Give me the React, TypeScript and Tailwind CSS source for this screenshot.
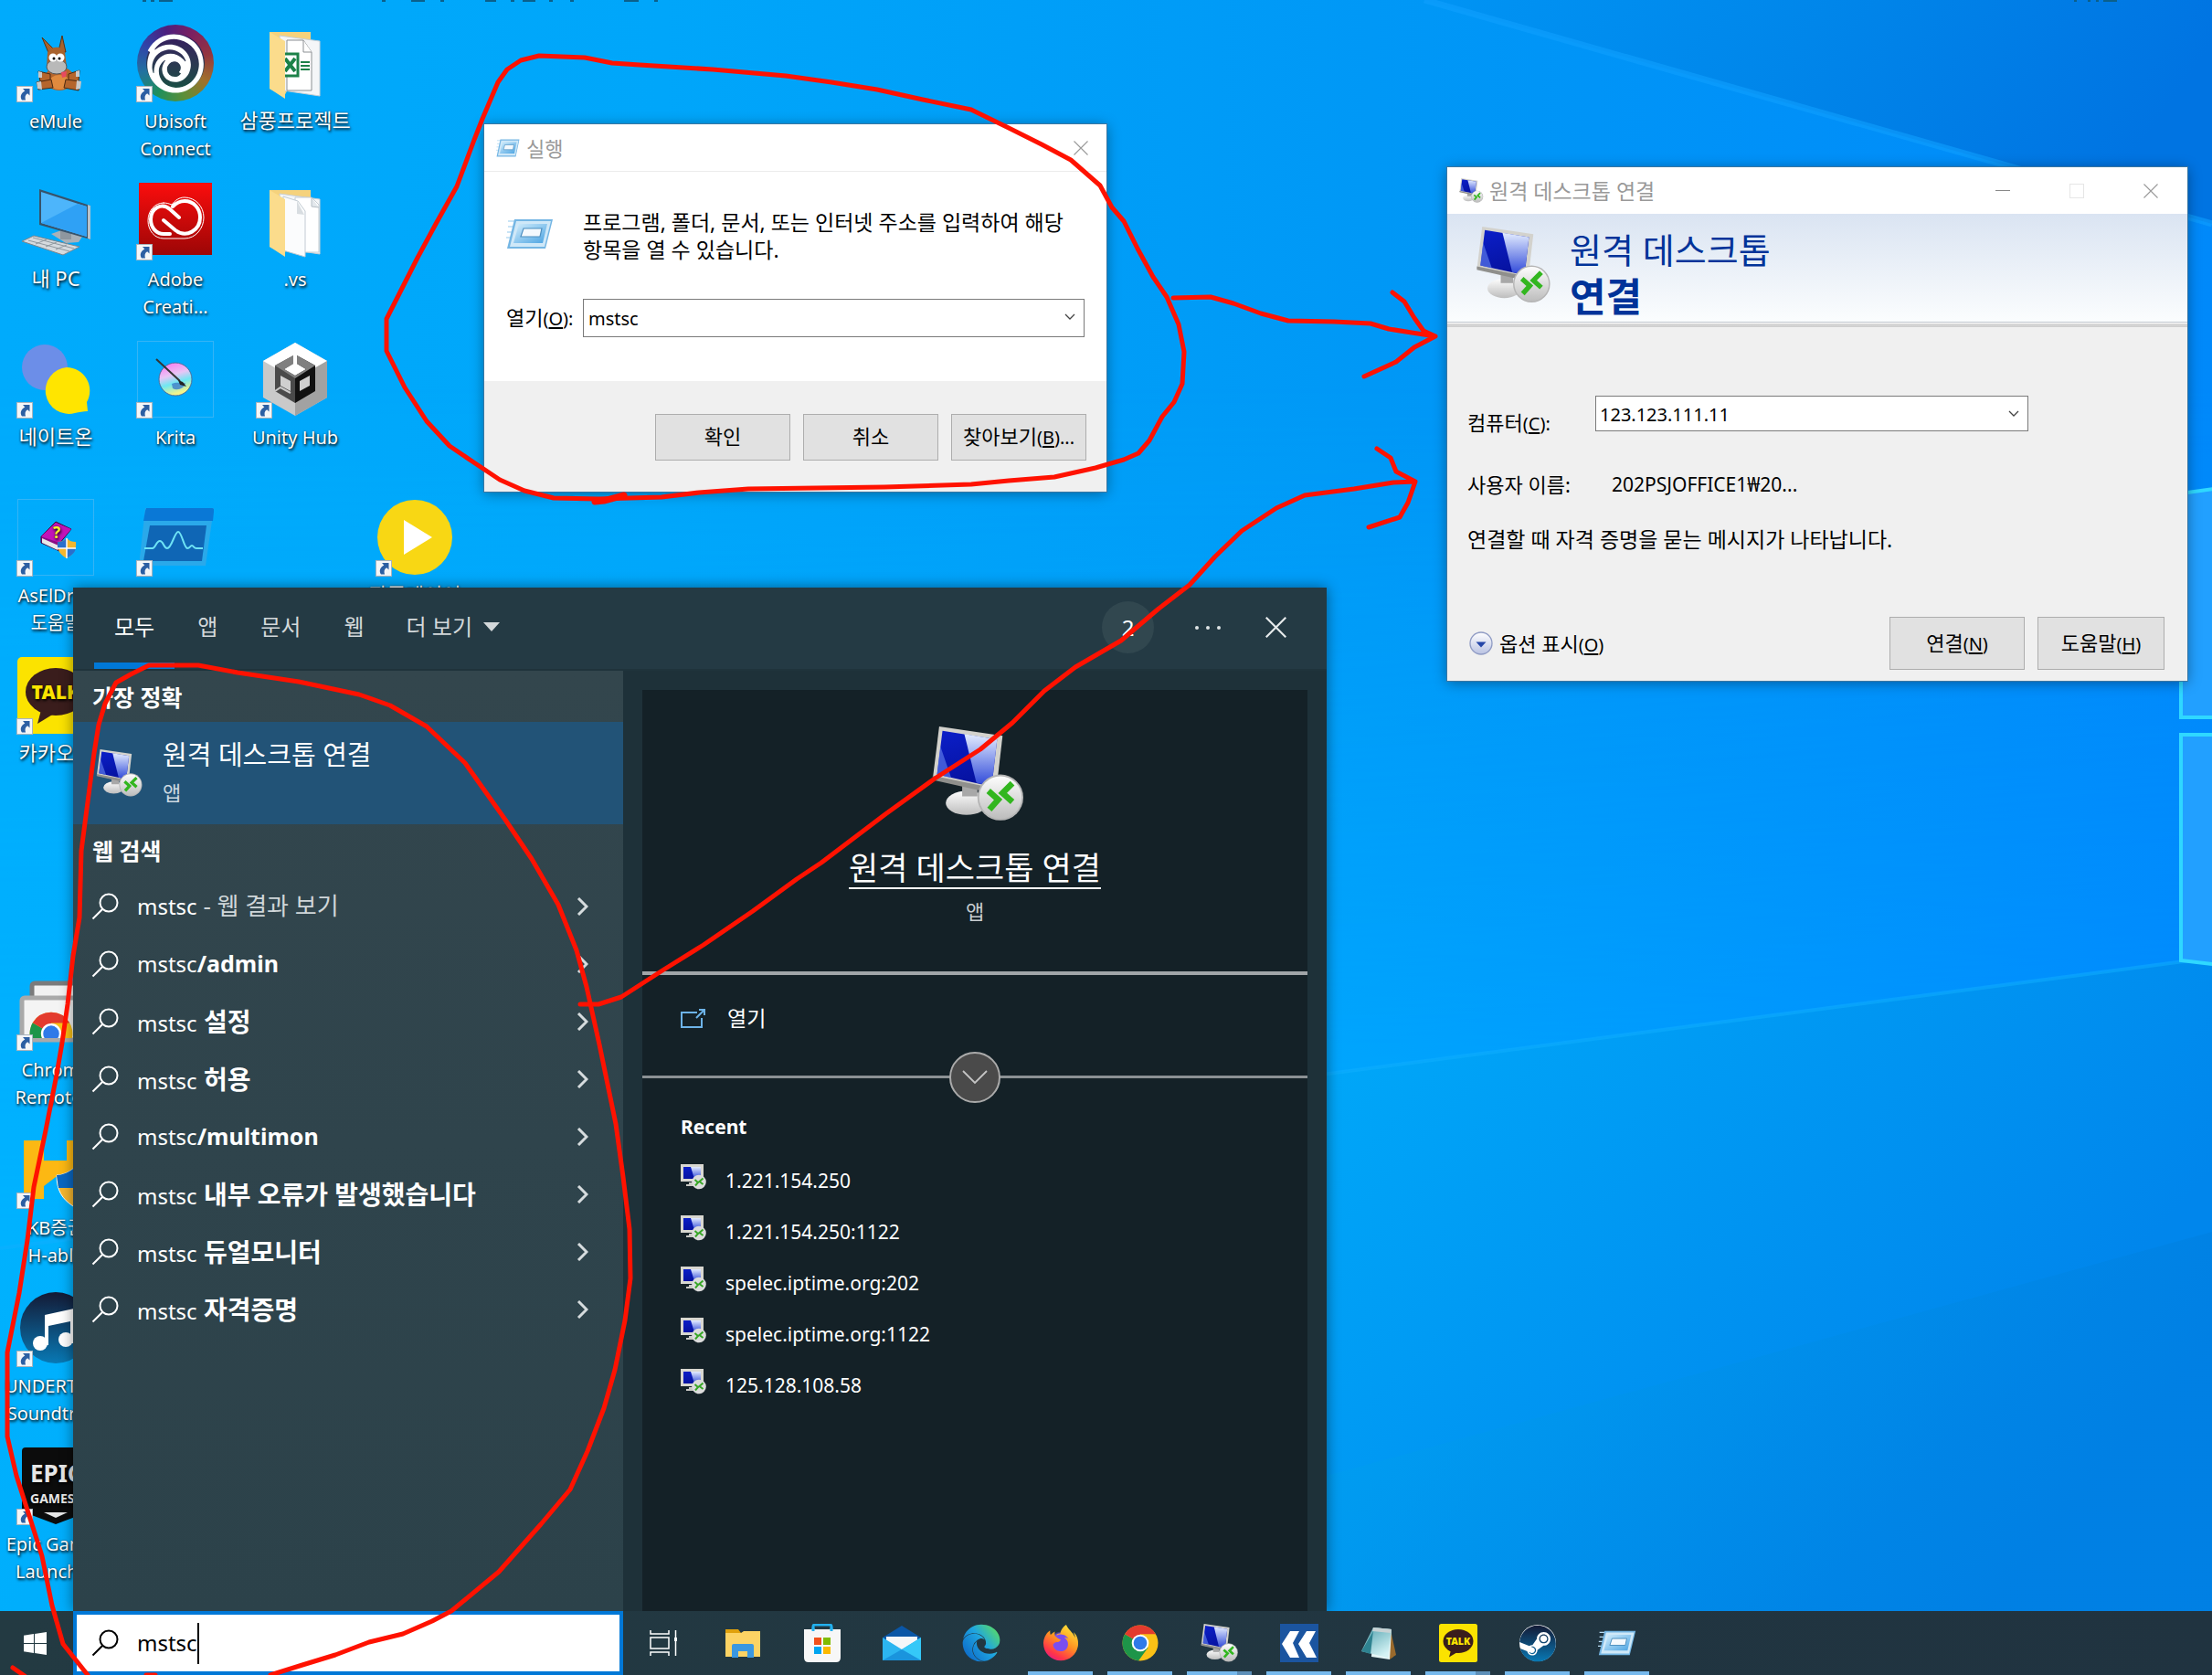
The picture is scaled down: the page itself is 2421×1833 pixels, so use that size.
import type { ReactNode } from 'react';
import { FaEdge, FaFirefoxBrowser, FaSteam } from 'react-icons/fa';
import { SiUbisoft } from 'react-icons/si';

export default function App() {
  return (
    <div className="relative flex min-h-screen flex-col overflow-hidden bg-[#00a2f8] font-['Noto_Sans','Noto_Sans_CJK_KR',sans-serif] text-black">
      <Gradients />
      <Wallpaper />
      <main className="relative flex-1">
        <DesktopIcons />
        <RunDialog />
        <RemoteDesktopWindow />
        <SearchPanel />
      </main>
      <Taskbar />
      <Annotations />
    </div>
  );
}

/* ---------- desktop ---------- */

type Shortcut = {
  lines: string[];
  icon: ReactNode;
  link?: boolean;
  korean?: boolean;
  framed?: boolean;
};

const DESKTOP: (Shortcut | null)[] = [
  { lines: ['eMule'], icon: <MuleIcon />, link: true },
  { lines: ['Ubisoft', 'Connect'], icon: <UbisoftIcon />, link: true },
  { lines: ['삼풍프로젝트'], icon: <FolderIcon excel />, korean: true },
  null,
  { lines: ['내 PC'], icon: <PcIcon />, korean: true },
  { lines: ['Adobe', 'Creati...'], icon: <CreativeCloudIcon />, link: true },
  { lines: ['.vs'], icon: <FolderIcon /> },
  null,
  { lines: ['네이트온'], icon: <NateOnIcon />, link: true, korean: true },
  { lines: ['Krita'], icon: <KritaIcon />, link: true, framed: true },
  { lines: ['Unity Hub'], icon: <UnityIcon />, link: true },
  null,
  { lines: ['AsElDra..', '도움말'], icon: <HelpBookIcon />, link: true, framed: true },
  { lines: [], icon: <MonitorAppIcon />, link: true },
  null,
  { lines: ['팟플레이어'], icon: <PlayIcon />, link: true, korean: true },
  { lines: ['카카오톡'], icon: <KakaoIcon />, link: true, korean: true },
  null,
  null,
  null,
  null,
  null,
  null,
  null,
  { lines: ['Chrome', 'Remote...'], icon: <ChromeRemoteIcon />, link: true },
  null,
  null,
  null,
  { lines: ['KB증권', 'H-able'], icon: <HableIcon />, link: true },
  null,
  null,
  null,
  { lines: ['UNDERTALE', 'Soundtrack'], icon: <MusicIcon />, link: true },
  null,
  null,
  null,
  { lines: ['Epic Games', 'Launcher'], icon: <EpicIcon />, link: true },
];

function DesktopIcons() {
  return (
    <div className="absolute left-0 top-[27px] grid grid-cols-[repeat(4,122px)] auto-rows-[151px] gap-x-[9px] gap-y-[22px]">
      {DESKTOP.map((item, i) => (item ? <DesktopIcon key={i} item={item} /> : <div key={i} />))}
    </div>
  );
}

function DesktopIcon({ item }: { item: Shortcut }) {
  return (
    <button className="flex flex-col items-center gap-[7px] text-white [text-shadow:1px_2px_3px_rgb(0_0_0/0.9),0_0_2px_rgb(0_0_0/0.6)]">
      <span
        className={`relative block size-[84px] ${item.framed ? 'outline outline-1 -outline-offset-1 outline-[#35b4f5]' : ''}`}
      >
        {item.icon}
        {item.link && <ShortcutBadge />}
      </span>
      <span
        className={`block whitespace-nowrap ${item.korean ? 'text-[22px] leading-[27px]' : 'text-[20px] leading-[30px]'}`}
      >
        {item.lines.map((line) => (
          <span key={line} className="block">
            {line}
          </span>
        ))}
      </span>
    </button>
  );
}

function ShortcutBadge() {
  return (
    <svg viewBox="0 0 18 18" className="absolute -left-px -bottom-px size-[18px]">
      <rect x="0.5" y="0.5" width="17" height="17" fill="#f4f6f8" stroke="#a9b4bd" />
      <path d="M7 3h7.500v7.500l-2.300-2.300C9.500 9.800 9 12 10 15.500H6C3.500 11.500 5 8 9.300 5.400z" fill="#2c5fa3" />
    </svg>
  );
}

/* ---------- run dialog ---------- */

function RunDialog() {
  return (
    <section
      aria-label="실행"
      className="absolute left-[530px] top-[136px] flex w-[681px] flex-col bg-[#f0f0f0] shadow-[0_2px_14px_rgb(0_0_0/0.4)] outline outline-1 outline-[#3a77a3]"
    >
      <header className="flex h-[52px] items-center border-b border-[#ececec] bg-white pl-[13px] pr-[20px] text-[22px] text-[#999]">
        <RunIcon className="h-[20px] w-[26px]" />
        <h2 className="ml-[7px] leading-[30px]">실행</h2>
        <button aria-label="닫기" className="ml-auto">
          <CloseGlyph className="size-[16px]" />
        </button>
      </header>
      <div className="bg-white px-6 pb-[47px] pt-[40px]">
        <div className="flex items-start">
          <RunIcon className="mt-[11px] h-[34px] w-[52px]" />
          <p className="ml-8 whitespace-nowrap text-[23px] leading-[30px]">
            프로그램, 폴더, 문서, 또는 인터넷 주소를 입력하여 해당
            <br />
            항목을 열 수 있습니다.
          </p>
        </div>
        <div className="mt-[38px] flex items-center">
          <label htmlFor="run-open" className="w-[84px] whitespace-nowrap text-[22px] leading-[42px]">
            열기
            <Key k="O" after=":" />
          </label>
          <Combo id="run-open" value="mstsc" className="h-[42px] w-[549px] pl-[5px]" />
        </div>
      </div>
      <footer className="flex justify-end gap-[14px] pb-[34px] pr-[22px] pt-[36px]">
        <PushButton className="h-[51px] w-[148px]">확인</PushButton>
        <PushButton className="h-[51px] w-[148px]">취소</PushButton>
        <PushButton className="h-[51px] w-[148px]">
          찾아보기
          <Key k="B" after="..." />
        </PushButton>
      </footer>
    </section>
  );
}

function Key({ k, after = '' }: { k: string; after?: string }) {
  return (
    <span className="text-[20px]">
      (<u className="underline-offset-2">{k}</u>){after}
    </span>
  );
}

function PushButton({ children, className }: { children: ReactNode; className: string }) {
  return (
    <button
      className={`whitespace-nowrap border border-[#adadad] bg-[#e1e1e1] pb-0.5 text-center text-[22px] ${className}`}
    >
      {children}
    </button>
  );
}

function Combo({ id, value, className }: { id: string; value: string; className: string }) {
  return (
    <span className="relative flex">
      <select
        id={id}
        defaultValue={value}
        className={`appearance-none rounded-none border border-[#7a7a7a] bg-white pt-0.5 text-[20px] ${className}`}
      >
        <option>{value}</option>
      </select>
      <svg viewBox="0 0 12 8" className="pointer-events-none absolute right-[10px] top-4 h-[8px] w-[12px]">
        <path d="M1 1l5 5 5-5" fill="none" stroke="#444" strokeWidth="1.300" />
      </svg>
    </span>
  );
}

/* ---------- remote desktop window ---------- */

function RemoteDesktopWindow() {
  return (
    <section
      aria-label="원격 데스크톱 연결"
      className="absolute left-[1584px] top-[183px] flex w-[810px] flex-col bg-[#f0f0f0] shadow-[0_2px_14px_rgb(0_0_0/0.4)] outline outline-1 outline-[#3a77a3]"
    >
      <div className="flex h-[51px] items-center bg-white pl-[13px] pr-8 text-[#999]">
        <RemoteIcon className="size-[27px]" />
        <h2 className="ml-[6px] text-[23px] leading-[30px]">원격 데스크톱 연결</h2>
        <div className="ml-auto flex items-center gap-[65px]">
          <button aria-label="최소화" className="flex h-4 w-4 items-center">
            <span className="h-px w-4 bg-[#888]" />
          </button>
          <button aria-label="최대화" disabled className="size-4 border border-[#e6e6e6]" />
          <button aria-label="닫기">
            <CloseGlyph className="size-[16px]" />
          </button>
        </div>
      </div>
      <div className="flex h-[119px] border-b border-[#bfc5cc] bg-gradient-to-b from-[#dae4f2] via-[#eef3f9] via-60% to-[#fbfdfe] pl-[31px] text-[#003399]">
        <RemoteIcon className="mt-[14px] size-[84px]" />
        <h1 className="ml-[19px] mt-[14px] whitespace-nowrap">
          <span className="block text-[38px] leading-[50px]">원격 데스크톱</span>
          <b className="block text-[43px] leading-[54px]">연결</b>
        </h1>
      </div>
      <div className="h-[5px] border-t border-white bg-gradient-to-b from-[#d9d9d9] to-[#cfcfcf]" />
      <div className="px-[22px] text-[22px] leading-[30px]">
        <div className="mt-[75px] flex">
          <label htmlFor="rdp-computer" className="mt-[14px] w-[140px]">
            컴퓨터
            <Key k="C" after=":" />
          </label>
          <Combo id="rdp-computer" value="123.123.111.11" className="h-[39px] w-[474px] pl-[4px]" />
        </div>
        <dl className="mt-[36px] flex">
          <dt className="w-[158px]">사용자 이름:</dt>
          <dd className="text-[21px]">202PSJOFFICE1₩20...</dd>
        </dl>
        <p className="mt-[30px] text-[23px]">연결할 때 자격 증명을 묻는 메시지가 나타납니다.</p>
      </div>
      <div className="mt-[70px] flex items-center gap-[14px] pb-3 pl-6 pr-[25px]">
        <button className="mr-auto flex items-center gap-[7px] text-[22px]">
          <svg viewBox="0 0 26 26" className="size-[26px]">
            <circle cx="13" cy="13" r="12" fill="url(#orb)" stroke="#8f9bc4" strokeWidth="1.300" />
            <path d="M7.500 11.500h11L13 17.500z" fill="#2446a8" />
          </svg>
          <span>
            옵션 표시
            <Key k="O" />
          </span>
        </button>
        <PushButton className="h-[58px] w-[148px]">
          연결
          <Key k="N" />
        </PushButton>
        <PushButton className="h-[58px] w-[139px]">
          도움말
          <Key k="H" />
        </PushButton>
      </div>
    </section>
  );
}

/* ---------- search panel ---------- */

const TABS = ['모두', '앱', '문서', '웹'];

const SUGGESTIONS: { rest: string; plain?: boolean }[] = [
  { rest: ' - 웹 결과 보기', plain: true },
  { rest: '/admin' },
  { rest: ' 설정' },
  { rest: ' 허용' },
  { rest: '/multimon' },
  { rest: ' 내부 오류가 발생했습니다' },
  { rest: ' 듀얼모니터' },
  { rest: ' 자격증명' },
];

const RECENT = [
  '1.221.154.250',
  '1.221.154.250:1122',
  'spelec.iptime.org:202',
  'spelec.iptime.org:1122',
  '125.128.108.58',
];

function SearchPanel() {
  return (
    <section
      aria-label="검색"
      className="absolute bottom-0 left-[80px] top-[643px] flex w-[1372px] flex-col bg-[#1e3139] text-white shadow-[0_0_14px_rgb(0_0_0/0.45)]"
    >
      <header className="flex h-[91px] items-stretch border-b-2 border-[#1f333b] bg-[#243a44] pl-[23px] pr-[44px]">
        <nav className="flex gap-[3px] text-[24px] text-[#d3d8da]">
          {TABS.map((tab, i) => (
            <button
              key={tab}
              className={`border-b-[7px] px-[22px] pt-1 ${i === 0 ? 'border-[#0078d7] text-white' : 'border-transparent'}`}
            >
              {tab}
            </button>
          ))}
          <button className="flex items-center gap-3 border-b-[7px] border-transparent px-[21px] pt-1">
            더 보기
            <svg viewBox="0 0 18 10" className="h-[10px] w-[18px]">
              <path d="M0 0h18L9 10z" fill="#d3d8da" />
            </svg>
          </button>
        </nav>
        <div className="ml-auto flex items-center pb-0.5">
          <button className="size-[57px] rounded-full bg-[#31474f] text-[24px]">2</button>
          <button aria-label="옵션" className="ml-[45px] flex gap-2">
            <span className="size-[4px] rounded-full bg-[#dfe4e6]" />
            <span className="size-[4px] rounded-full bg-[#dfe4e6]" />
            <span className="size-[4px] rounded-full bg-[#dfe4e6]" />
          </button>
          <button aria-label="닫기" className="ml-[49px] text-[#e6eaeb]">
            <CloseGlyph className="size-[23px]" heavy />
          </button>
        </div>
      </header>
      <div className="flex flex-1">
        <div className="w-[602px] bg-gradient-to-b from-[#33464d] via-[#2f444c] via-50% to-[#2c424a]">
          <h3 className="h-[56px] pl-[21px] text-[25px] font-bold leading-[58px]">가장 정확</h3>
          <button className="flex h-[112px] w-full items-center bg-[#225377] pl-[25px] text-left">
            <RemoteIcon className="size-[52px]" />
            <span className="ml-[21px]">
              <span className="block text-[29px] leading-[42px]">원격 데스크톱 연결</span>
              <span className="block text-[22px] leading-[40px] text-[#cdd9e2]">앱</span>
            </span>
          </button>
          <h3 className="h-[58px] pl-[21px] text-[25px] font-bold leading-[58px]">웹 검색</h3>
          <ul>
            {SUGGESTIONS.map((s) => (
              <li key={s.rest}>
                <button className="flex h-[63px] w-full items-center pl-[20px] pr-[38px] text-left text-[24px]">
                  <SearchGlyph className="size-[30px]" />
                  <span className="ml-[20px] whitespace-pre">
                    mstsc
                    {s.plain ? (
                      <span className="text-[26px] text-[#cfd6d9]">{s.rest}</span>
                    ) : (
                      <b className={s.rest.startsWith('/') ? 'text-[25px]' : 'text-[28px]'}>{s.rest}</b>
                    )}
                  </span>
                  <svg viewBox="0 0 13 20" className="ml-auto h-[20px] w-[13px]">
                    <path d="M2 1l9 9-9 9" fill="none" stroke="#d6dcde" strokeWidth="3" />
                  </svg>
                </button>
              </li>
            ))}
          </ul>
        </div>
        <div className="flex flex-1 px-[21px] pt-[21px]">
          <div className="flex-1 bg-[#142127]">
            <div className="flex h-[308px] flex-col items-center pt-[40px]">
              <RemoteIcon className="ml-[7px] size-[104px]" />
              <a href="#open" className="mt-[30px] border-b-2 border-white text-[35px] leading-[42px]">
                원격 데스크톱 연결
              </a>
              <span className="mt-2 text-[22px] leading-[32px] text-[#c8cdd0]">앱</span>
            </div>
            <div className="h-[4px] bg-[#a0a5a8]" />
            <button className="flex h-[110px] w-full items-center gap-6 pb-[16px] pl-[42px] text-[23px]">
              <svg viewBox="0 0 27 22" className="h-[22px] w-[27px]" fill="none" stroke="#6db3e8" strokeWidth="2">
                <path d="M18 5H1v16h22V11M17 11l8-8M20 2h6v6" />
              </svg>
              열기
            </button>
            <div className="relative h-[3px] bg-[#8b9194]">
              <button
                aria-label="확장"
                className="absolute -top-[26px] left-1/2 flex size-[56px] -translate-x-1/2 items-center justify-center rounded-full border-2 border-[#aaa] bg-[#4a4a4a]"
              >
                <svg viewBox="0 0 28 16" className="h-[16px] w-[28px]">
                  <path d="M1 1l13 13L27 1" fill="none" stroke="#c4c4c4" strokeWidth="1.800" />
                </svg>
              </button>
            </div>
            <h3 className="mt-[37px] pl-[42px] text-[21px] font-bold leading-[32px]">Recent</h3>
            <ul className="mt-[16px]">
              {RECENT.map((host) => (
                <li key={host}>
                  <button className="flex h-[56px] w-full items-center pl-[42px] text-[21px]">
                    <SmallRemoteIcon />
                    <span className="ml-[21px]">{host}</span>
                  </button>
                </li>
              ))}
            </ul>
          </div>
        </div>
      </div>
    </section>
  );
}

/* ---------- taskbar ---------- */

const TASKS: { name: string; icon: ReactNode; open?: 'one' | 'many' }[] = [
  { name: '작업 보기', icon: <TaskViewIcon /> },
  { name: '파일 탐색기', icon: <ExplorerIcon /> },
  { name: 'Microsoft Store', icon: <StoreIcon /> },
  { name: '메일', icon: <MailIcon /> },
  { name: 'Edge', icon: <FaEdge className="size-[42px]" fill="url(#edge)" /> },
  { name: 'Firefox', icon: <FirefoxIcon />, open: 'one' },
  { name: 'Chrome', icon: <ChromeIcon className="size-[40px]" />, open: 'one' },
  { name: '원격 데스크톱 연결', icon: <RemoteIcon className="size-[42px]" />, open: 'many' },
  { name: 'KK', icon: <DoubleArrowIcon />, open: 'one' },
  { name: '메모장', icon: <NotepadIcon />, open: 'one' },
  { name: '카카오톡', icon: <span className="size-[42px]"><KakaoIcon /></span>, open: 'many' },
  { name: 'Steam', icon: <SteamIcon />, open: 'one' },
  { name: '실행', icon: <RunIcon className="h-[28px] w-[42px]" />, open: 'one' },
];

function Taskbar() {
  return (
    <footer className="relative flex h-[70px] bg-gradient-to-r from-[#233a42] to-[#203340]">
      <button aria-label="시작" className="flex w-[80px] items-center justify-center pr-1">
        <svg viewBox="0 0 24 24" className="size-[25px]" fill="#fff">
          <path d="M0 3.500L10.500 2v9.500H0zM11.500 1.900L24 0v11.500H11.500zM0 12.500h10.500V22L0 20.500zM11.500 12.500H24V24l-12.500-1.900z" />
        </svg>
      </button>
      <label className="flex w-[602px] items-center border-4 border-[#0078d7] bg-white pl-[16px] text-[24px]">
        <SearchGlyph className="size-[30px]" />
        <span className="ml-[20px] flex items-center">
          <input aria-label="검색" defaultValue="mstsc" size={5} className="w-[66px] outline-none" />
          <span className="h-[45px] w-[2px] bg-black" />
        </span>
      </label>
      {TASKS.map((task) => (
        <button key={task.name} aria-label={task.name} className="flex w-[87px] flex-col items-center">
          <span className="flex flex-1 items-center pt-1">{task.icon}</span>
          <span className="flex h-[4px] w-[71px]">
            {task.open && <span className="flex-1 bg-[#76b9ed]" />}
            {task.open === 'many' && <span className="w-4 bg-[#5d8fb8]" />}
          </span>
        </button>
      ))}
    </footer>
  );
}

/* ---------- wallpaper and pen strokes ---------- */

function Wallpaper() {
  return (
    <svg viewBox="0 0 2421 1833" preserveAspectRatio="none" className="absolute inset-0 h-full w-full">
      <defs>
        <linearGradient id="sky" x1="0" x2="1" y1="0" y2="0">
          <stop offset="0" stopColor="#00abfc" />
          <stop offset="0.300" stopColor="#00a6fa" />
          <stop offset="0.620" stopColor="#0098f6" />
          <stop offset="1" stopColor="#0089fa" />
        </linearGradient>
        <linearGradient id="skyTop" x1="0" x2="1" y1="0" y2="0.200">
          <stop offset="0" stopColor="#0094f4" />
          <stop offset="0.500" stopColor="#0086ea" />
          <stop offset="1" stopColor="#0074e2" />
        </linearGradient>
        <linearGradient id="beam" x1="0" x2="1" y1="0" y2="0">
          <stop offset="0" stopColor="#00b2ff" />
          <stop offset="0.600" stopColor="#00a9ff" />
          <stop offset="1" stopColor="#008cff" />
        </linearGradient>
        <linearGradient id="beamFade" x1="0" x2="0" y1="0" y2="1">
          <stop offset="0.300" stopColor="#fff" stopOpacity="0" />
          <stop offset="1" stopColor="#fff" />
        </linearGradient>
        <mask id="beamMask" maskUnits="userSpaceOnUse" x="0" y="0" width="2421" height="1400">
          <rect width="2421" height="1400" fill="url(#beamFade)" />
        </mask>
        <linearGradient id="floor" x1="0" x2="1" y1="0" y2="0.300">
          <stop offset="0" stopColor="#00b4ff" />
          <stop offset="0.600" stopColor="#00a6f8" />
          <stop offset="1" stopColor="#0086ec" />
        </linearGradient>
        <linearGradient id="floorLow" x1="0" x2="1" y1="0" y2="0.200">
          <stop offset="0" stopColor="#00b2fb" />
          <stop offset="0.600" stopColor="#00a5f2" />
          <stop offset="1" stopColor="#007bdd" />
        </linearGradient>
      </defs>
      <rect width="2421" height="1833" fill="url(#sky)" />
      <path d="M1559 0L2421 245V0z" fill="url(#skyTop)" />
      <path d="M1559 0L2421 245" stroke="#10a0ff" strokeWidth="7" opacity="0.600" />
      <path d="M0 400L2421 400V1048L0 1366z" fill="url(#beam)" mask="url(#beamMask)" />
      <path d="M0 1366L2421 1048V1833H0z" fill="url(#floor)" />
      <path d="M0 1366L2421 1048" stroke="#10b0ff" strokeWidth="4" opacity="0.500" />
      <path d="M0 1833V1930L1452 1615 2421 1348V1833z" fill="url(#floorLow)" opacity="0.550" />
      <g fill="#22a0ff" stroke="#2fd8ff" strokeWidth="4">
        <path d="M2387 540L2430 534V785H2387z" />
        <path d="M2387 804H2430V1056L2387 1051z" />
      </g>
      <path
        d="M156 1h4M165 1h4M174 1h15M418 1h4M450 1h15M482 1h4M531 1h12M559 1h4M572 1h14M601 1h4M624 1h4M683 1h16M716 1h4M2270 1h3M2285 1h3M2294 1h3M2302 1h15"
        stroke="#0b5f8a"
        strokeWidth="2"
      />
    </svg>
  );
}

function Annotations() {
  return (
    <svg
      viewBox="0 0 2421 1833"
      preserveAspectRatio="none"
      className="pointer-events-none absolute inset-0 h-full w-full"
      fill="none"
      stroke="#ff1200"
      strokeWidth="5"
      strokeLinecap="round"
      strokeLinejoin="round"
    >
      <path d="M519 153L528 130 545 90 555 76 570 66 590 61 640 63 670 69 700 71 780 76 860 83 910 90 960 98 1010 109 1063 120 1104 140 1140 158 1172 175 1204 203 1217 227 1230 242 1245 272 1262 303 1277 325 1290 355 1296 385 1294 420 1285 440 1272 456 1258 482 1246 496 1230 503 1199 512 1154 522 1104 526 1063 530 968 533 819 535 765 539 724 544 655 546 606 545 574 537 547 525 520 507 492 488 467 461 443 424 423 384 423 349 457 282 477 245 500 204z" />
      <path d="M651 549l10-1 22-6" strokeWidth="7" />
      <path d="M96 1833L69 1799 57 1757 46 1703 34 1665 18 1615 8 1572 8 1480 21 1415 30 1357 37 1299 50 1237 62 1176 68 1141 74 1099 80 1046 87 1004 89 931 97 870 103 824 108 793 115 770 127 747 143 738 163 728 217 728 260 736 327 746 393 760 427 772 467 795 509 835 553 897 582 940 611 990 631 1040 642 1080 656 1143 674 1230 682 1288 689 1345 690 1399 684 1445 673 1499 661 1541 643 1588 624 1630 592 1668 546 1720 494 1763 473 1774 441 1788 404 1797 367 1811 331 1822 296 1833" />
      <path d="M14 1825l13 9M160 1833h10" />
      <path d="M1284 326L1325 325 1350 332 1380 343 1410 351 1460 352 1500 354 1520 360 1545 364 1571 368M1524 320L1537 330 1548 348 1558 362 1571 368M1493 412L1528 396 1548 380 1571 368" />
      <path d="M635 1099L655 1099 680 1091 725 1062 770 1034 824 997 872 962 899 944 969 891 1023 852 1048 836 1073 820 1108 791 1143 756 1177 730 1227 701 1267 667 1302 640 1330 609 1359 581 1397 556 1428 542 1482 535 1525 528 1549 527M1507 491L1522 501 1528 516 1549 527 1541 550 1532 566 1498 577" />
    </svg>
  );
}

/* ---------- icons ---------- */

// shared by every svg on the page
function Gradients() {
  return (
    <svg className="absolute size-0" aria-hidden="true">
      <defs>
        <linearGradient id="screen" x1="0" x2="0.300" y1="0" y2="1">
          <stop offset="0" stopColor="#0b1fc9" />
          <stop offset="1" stopColor="#0612a0" />
        </linearGradient>
        <linearGradient id="shine" x1="0" x2="0" y1="0" y2="1">
          <stop offset="0" stopColor="#e3ecff" />
          <stop offset="1" stopColor="#2b45d8" />
        </linearGradient>
        <linearGradient id="metal" x1="0" x2="0" y1="0" y2="1">
          <stop offset="0" stopColor="#fdfdfd" />
          <stop offset="1" stopColor="#bdbdbd" />
        </linearGradient>
        <linearGradient id="orb" x1="0" x2="0" y1="0" y2="1">
          <stop offset="0" stopColor="#fff" />
          <stop offset="1" stopColor="#b9c2e2" />
        </linearGradient>
        <linearGradient id="edge" x1="0" x2="1" y1="0.900" y2="0.100">
          <stop offset="0" stopColor="#0b63c5" />
          <stop offset="0.550" stopColor="#1fa5e0" />
          <stop offset="1" stopColor="#5fe05a" />
        </linearGradient>
        <linearGradient id="fox" x1="0.800" x2="0.200" y1="0" y2="1">
          <stop offset="0" stopColor="#ffe83a" />
          <stop offset="0.450" stopColor="#ff9322" />
          <stop offset="0.800" stopColor="#ff3648" />
          <stop offset="1" stopColor="#e3188a" />
        </linearGradient>
        <linearGradient id="cc" x1="0" x2="0" y1="0" y2="1">
          <stop offset="0" stopColor="#fb0d0d" />
          <stop offset="1" stopColor="#9c0606" />
        </linearGradient>
        <linearGradient id="krita" x1="0" x2="0.300" y1="0" y2="1">
          <stop offset="0" stopColor="#ff6cf0" />
          <stop offset="0.450" stopColor="#e8c5f5" />
          <stop offset="0.700" stopColor="#6ee8f2" />
          <stop offset="1" stopColor="#f3f48a" />
        </linearGradient>
        <linearGradient id="night" x1="0" x2="0" y1="0" y2="1">
          <stop offset="0" stopColor="#141a35" />
          <stop offset="1" stopColor="#0879b5" />
        </linearGradient>
        <linearGradient id="pane" x1="0" x2="1" y1="0" y2="1">
          <stop offset="0" stopColor="#d4eefc" />
          <stop offset="1" stopColor="#4aa3e2" />
        </linearGradient>
        <linearGradient id="paper" x1="0" x2="0.600" y1="0" y2="1">
          <stop offset="0" stopColor="#4d9fac" />
          <stop offset="1" stopColor="#d5f3f5" />
        </linearGradient>
      </defs>
    </svg>
  );
}

function CloseGlyph({ className, heavy }: { className: string; heavy?: boolean }) {
  return (
    <svg viewBox="0 0 16 16" className={className} fill="none" stroke="currentColor" strokeWidth={heavy ? 1.5 : 1.1}>
      <path d="M.5.5l15 15M15.500.5l-15 15" />
    </svg>
  );
}

function SearchGlyph({ className }: { className: string }) {
  return (
    <svg viewBox="0 0 30 30" className={className} fill="none" stroke="currentColor" strokeWidth="2">
      <circle cx="19" cy="11" r="9.500" />
      <path d="M12.300 17.700L1.500 28.500" />
    </svg>
  );
}

function RemoteIcon({ className }: { className: string }) {
  return (
    <svg viewBox="0 0 84 87" className={className}>
      <ellipse cx="31" cy="70" rx="19" ry="11" fill="url(#metal)" />
      <path d="M27 50h14v14H27z" fill="#a8a8a8" />
      <path d="M6 0l58 8.500-6 52L0 48z" fill="#d3d2cd" />
      <path d="M0 45l59 12-1 5L0 49z" fill="#8f8f8c" />
      <path d="M9 4l50 8-5 43L4 44z" fill="url(#screen)" />
      <path d="M29 7l30 5-5 43-14-3.500z" fill="url(#shine)" />
      <path d="M7 18l10 29L4 44z" fill="#5a78e8" opacity="0.700" />
      <circle cx="62" cy="65" r="21" fill="#b5b5b5" />
      <circle cx="62" cy="65" r="19.500" fill="url(#metal)" />
      <path d="M51 59l9 8-8 9M73 52l-9 9 9 8" fill="none" stroke="#32b61f" strokeWidth="5.500" />
    </svg>
  );
}

function SmallRemoteIcon() {
  return (
    <svg viewBox="0 0 28 28" className="mb-[10px] size-[28px]">
      <path d="M9 20h7v3H9zM6 22h9v2H6z" fill="#c9c9c4" />
      <path d="M0 0h25v19H0z" fill="#d8d7d0" />
      <path d="M3 3h19v13H3z" fill="url(#screen)" />
      <path d="M11 3h11v13h-7z" fill="url(#shine)" />
      <circle cx="20" cy="19.500" r="7.800" fill="#dcdcdc" />
      <path d="M15.500 17l3.500 3-3 3.500M24.500 15.500l-4 3.500 4 3" fill="none" stroke="#37a626" strokeWidth="2" />
    </svg>
  );
}

function RunIcon({ className }: { className: string }) {
  return (
    <svg viewBox="0 0 52 34" className={className} preserveAspectRatio="none">
      <path d="M2 3h12M2 9h10M1 15h10M0 21h9" stroke="#b8dcf3" strokeWidth="1.500" />
      <path d="M9 1h42l-8 32H1z" fill="#74b6e4" />
      <path d="M11 3h38l-7 28H4z" fill="#cfe8f8" />
      <path d="M14 6h31l-5 21H8z" fill="url(#pane)" />
      <path d="M19 11h20l-2 9H16z" fill="#f4f9fd" stroke="#4d8fc0" strokeWidth="1.200" />
    </svg>
  );
}

function MuleIcon() {
  return (
    <svg viewBox="0 0 84 84">
      <path d="M35 33L27 14l12 12zM45 29L49 12l4 18z" fill="#a8622c" stroke="#5b3213" strokeWidth="1" />
      <ellipse cx="46" cy="59" rx="16" ry="13" fill="#b5652c" />
      <ellipse cx="46" cy="63" rx="11" ry="8" fill="#e08a3e" />
      <path d="M23 51l13 3v8H25zM68 50l-12 4v8h11z" fill="#b5652c" stroke="#4c2a12" strokeWidth="1" />
      <path d="M21 63l16-3 2 9-16 2zM69 62l-16-2-2 9 16 3z" fill="#b5652c" stroke="#4c2a12" strokeWidth="1" />
      <path d="M21 63l5-1 1 9-5-1zM70 62l-5-1-1 10 5-1zM23 51l4 1v6h-4zM68 50l-4 1v6h4z" fill="#c9c9c9" />
      <path d="M33 30c4-7 16-7 19 0l2 17c-6 7-17 7-22 0z" fill="#a8622c" />
      <ellipse cx="43" cy="46" rx="11" ry="8" fill="#b9b9b9" stroke="#555" strokeWidth="1" />
      <circle cx="39" cy="36" r="4.500" fill="#fff" />
      <circle cx="47" cy="36" r="4.500" fill="#fff" />
      <circle cx="40" cy="37" r="1.500" />
      <circle cx="46" cy="37" r="1.500" />
      <path d="M48 52l6-1-1 6-4 1z" fill="#e8495f" />
    </svg>
  );
}

function UbisoftIcon() {
  return (
    <span className="flex size-[84px] items-center justify-center rounded-full bg-[conic-gradient(from_-60deg,#3044a8,#4d1f7d,#7c2060,#93353f,#a0702c,#5c8f38,#1f8f5c,#2272a0,#3044a8)]">
      <span className="flex size-[64px] items-center justify-center rounded-full bg-gradient-to-b from-[#35185f] to-[#125040]">
        <SiUbisoft className="size-[65px]" />
      </span>
    </span>
  );
}

function FolderIcon({ excel }: { excel?: boolean }) {
  return (
    <svg viewBox="0 0 84 84">
      <path d="M14 8h45v20L30 78 14 70z" fill="#f5d27c" />
      <path d="M25 12l44 6v60l-40-6z" fill="#f4f6f8" stroke="#c9cfd4" strokeWidth="1" />
      {excel ? (
        <>
          <path d="M33 17h18l9 13v42H33z" fill="#fff" stroke="#8b8f93" strokeWidth="1" />
          <path d="M51 17v13h9" fill="#fff" stroke="#8b8f93" strokeWidth="1" />
          <path d="M27 32h18v24H27z" fill="#fff" stroke="#1c8148" strokeWidth="3" />
          <path d="M31 37l11 14M42 37L31 51" stroke="#1c8148" strokeWidth="4" />
          <path d="M48 41h10M48 45h10M48 49h10" stroke="#1c8148" strokeWidth="2" />
        </>
      ) : (
        <>
          <path d="M42 16h18l8 8v52H42z" fill="#fff" stroke="#c3ccd3" strokeWidth="1" />
          <path d="M60 16v10l8 1" fill="#e3e8ec" stroke="#b5bec5" strokeWidth="1" />
          <path d="M29 15l16 5 8 11v50l-24-7z" fill="#fbfcfd" stroke="#c3ccd3" strokeWidth="1" />
          <path d="M44 20v14l8 1" fill="#d8dde1" />
        </>
      )}
      <path d="M14 8l17 10v63L14 70z" fill="#fbdc8c" />
    </svg>
  );
}

function PcIcon() {
  return (
    <svg viewBox="0 0 84 84">
      <path d="M37 56l14-5 20 8-4 6-14 1z" fill="#a9b1b8" />
      <path d="M47 50h12v12H47z" fill="#8e979f" />
      <path d="M24 7l56 18v37L24 46z" fill="#37536b" />
      <path d="M77 24l3 1v37l-3-1z" fill="#b7c3cc" />
      <path d="M26 10l50 16v33L26 44z" fill="#4db5fb" />
      <path d="M26 44L66 23l10 3v33z" fill="#2fa1f5" />
      <path d="M5 64l13-6 50 12-18 9z" fill="#d5dade" stroke="#7d868d" strokeWidth="1" />
      <path d="M12 63l45 12M17 60l45 12M20 67l12-5M31 70l12-5M42 73l12-5" stroke="#8f989f" strokeWidth="1" />
    </svg>
  );
}

function CreativeCloudIcon() {
  return (
    <svg viewBox="0 0 84 84">
      <rect x="2" width="80" height="79" fill="url(#cc)" />
      <g fill="none" strokeLinecap="round">
        <path
          d="M29 22c4 0 6 1 9 2 4-5 8-8 14-8 12 0 21 10 21 22s-9 23-21 23H29c-10 0-17-9-17-19.500S19 22 29 22z"
          stroke="#fff"
          strokeWidth="1"
        />
        <path
          d="M46 38L36 29c-9-8-21-1-21 11 0 9 6 16 14 16h7M29 41l13 11c12 9 27 0 27-14 0-10-7-18-17-18-5 0-9 2-13 6"
          stroke="#fff"
          strokeWidth="4"
        />
      </g>
    </svg>
  );
}

function NateOnIcon() {
  return (
    <svg viewBox="0 0 84 84">
      <circle cx="30" cy="29" r="25" fill="#6c8ee8" />
      <path d="M54 29a25.500 25.500 0 1 0 9 50c5-1 9-2 14-2l-1-10A25.500 25.500 0 0 0 54 29z" fill="#ffe500" />
    </svg>
  );
}

function KritaIcon() {
  return (
    <svg viewBox="0 0 84 84">
      <circle cx="42" cy="42" r="18" fill="url(#krita)" stroke="#4a6f9c" strokeWidth="1" />
      <path d="M38 47c6-3 12 0 15-1-1 6-9 9-14 6z" fill="#3c7dc9" opacity="0.800" />
      <path d="M21 20l26 24" stroke="#333" strokeWidth="2" />
      <path d="M45 43l5 2 4 5-7-2z" fill="#222" />
    </svg>
  );
}

function UnityIcon() {
  return (
    <svg viewBox="0 0 84 84">
      <path d="M42 2l35 20v40L42 82 7 62V22z" fill="#c9c9c9" />
      <path d="M42 2l35 20-35 20L7 22z" fill="#fff" />
      <path d="M77 22v40L42 82V42z" fill="#a2a2a2" />
      <path d="M20 27l20-11v9l-10 6 12 7v30L20 55z" fill="#4a4a4a" />
      <path d="M64 27L44 16v9l10 6-12 7v30l22-13z" fill="#111" />
      <path d="M20 27l20-11v9l-10 6 12 7 12-7-10-6v-9l20 11-22 14z" fill="#808080" />
      <path d="M26 38l11 6v11l-11-6zM58 38l-11 6v11l11-6z" fill="#d0d0d0" />
      <path d="M32 31l10-6 10 6-10 6z" fill="#fff" />
      <path d="M20 55l6-4 11 6" fill="none" stroke="#c9c9c9" strokeWidth="2" />
    </svg>
  );
}

function HelpBookIcon() {
  return (
    <svg viewBox="0 0 84 84">
      <path d="M26 41l16-16 17 8-13 16v8l-20-9z" fill="#8a0f86" stroke="#3a0538" strokeWidth="1" />
      <path d="M27 43l18 8-1 5-17-8z" fill="#e9e9e9" />
      <path d="M26 41l16-15 17 7-13 15z" fill="#c114b8" />
      <text x="39" y="43" fill="#f7ef2a" className="text-[17px] font-bold">
        ?
      </text>
      <path d="M54 43c3 3 6 4 10 4 1 9-3 14-10 18-7-4-11-9-10-18 4 0 7-1 10-4z" fill="#f5b62e" />
      <path d="M54 43v11H44v-7c4 0 7-1 10-4zM54 54h10c-1 5-5 8-10 11z" fill="#2a6fcc" />
      <path d="M54 43v22M44 54h20" stroke="#fff" strokeWidth="1.500" />
    </svg>
  );
}

function MonitorAppIcon() {
  return (
    <svg viewBox="0 0 84 84">
      <path d="M9 10h75l-9 63H2z" fill="#2aa9ea" />
      <path d="M10 10h72q3 0 2 4l-1 10H7l2-11z" fill="#0a78d6" />
      <path d="M14 29h62l-5 39H7z" fill="#0f66b5" />
      <path d="M8 54h9c3 0 4-8 8-8s4 8 8 8c5 0 8-18 12-18s6 17 10 18c3 0 3-3 5-3s2 3 5 3h7" fill="none" stroke="#6ee3f5" strokeWidth="2" />
    </svg>
  );
}

function PlayIcon() {
  return (
    <svg viewBox="0 0 84 84">
      <circle cx="42" cy="42" r="41" fill="#f8d714" />
      <path d="M30 23l31 19-31 19z" fill="#fff" />
    </svg>
  );
}

function KakaoIcon() {
  return (
    <svg viewBox="0 0 84 84">
      <rect width="84" height="84" rx="5" fill="#fbe300" />
      <ellipse cx="42" cy="38" rx="33" ry="26" fill="#3a1d1c" />
      <path d="M26 58l-4 15 18-11z" fill="#3a1d1c" />
      <text x="42" y="46" textAnchor="middle" fill="#fbe300" className="text-[21px] font-black">
        TALK
      </text>
    </svg>
  );
}

function ChromeWheel() {
  return (
    <>
      <circle cx="20" cy="20" r="19.500" fill="#fbc116" />
      <path d="M20 20L3.100 10.200A19.500 19.500 0 0 0 18 39.400L28.500 24.900z" fill="#1e9549" />
      <path d="M20 20L3.100 10.200A19.500 19.500 0 0 1 36.900 10.300H20z" fill="#e33b2e" />
      <circle cx="20" cy="20" r="9.300" fill="#fff" />
      <circle cx="20" cy="20" r="7.300" fill="#2f7ae8" />
    </>
  );
}

function ChromeIcon({ className }: { className: string }) {
  return (
    <svg viewBox="0 0 40 40" className={className}>
      <ChromeWheel />
    </svg>
  );
}

function ChromeRemoteIcon() {
  return (
    <svg viewBox="0 0 84 84">
      <rect x="16" y="11" width="66" height="44" rx="3" fill="#f1f1f1" stroke="#7b7b7b" strokeWidth="5" />
      <rect x="5" y="27" width="66" height="46" rx="3" fill="#f4f4f4" stroke="#a9a9a9" strokeWidth="5" />
      <svg x="13" y="42" width="48" height="29" viewBox="0 0 40 24">
        <ChromeWheel />
      </svg>
    </svg>
  );
}

function HableIcon() {
  return (
    <svg viewBox="0 0 84 84">
      <path d="M7 10h22v22h25V10h22v64H54V50H42L29 60v14H7z" fill="#fcb813" />
      <path d="M43 48c6 0 13-3 18-7 5 4 12 7 18 7 0 17-6 26-18 34-12-8-18-17-18-34z" fill="#f5b62e" stroke="#fff" strokeWidth="1" />
      <path d="M43 48c6 0 13-3 18-7v21H45z" fill="#0a67c2" />
    </svg>
  );
}

function MusicIcon() {
  return (
    <svg viewBox="0 0 84 84">
      <circle cx="42" cy="42" r="39" fill="url(#night)" />
      <path d="M30 28l32-7v38h-4V35l-24 5v21h-4z" fill="#fff" />
      <circle cx="25" cy="59" r="8" fill="#fff" />
      <circle cx="53" cy="55" r="8" fill="#fff" />
    </svg>
  );
}

function EpicIcon() {
  return (
    <svg viewBox="0 0 84 84">
      <path d="M9 0h66q4 0 4 4v66L42 84 5 70V4q0-4 4-4z" fill="#0c0c0c" />
      <text x="14" y="38" fill="#e6e6e6" className="text-[26px] font-bold">
        EPIC
      </text>
      <text x="14" y="61" fill="#e6e6e6" className="text-[14px] font-bold">
        GAMES
      </text>
      <path d="M29 71h26l-13 6z" fill="#e6e6e6" />
    </svg>
  );
}

function TaskViewIcon() {
  return (
    <svg viewBox="0 0 30 28" className="h-[28px] w-[30px]" fill="none" stroke="#fff" strokeWidth="1.500">
      <path d="M1 0v4h20V0M1 28v-4h20v4M1 8h20v12H1zM28.500 0v28" />
      <path d="M27 8h3v4h-3z" fill="#fff" stroke="none" />
    </svg>
  );
}

function ExplorerIcon() {
  return (
    <svg viewBox="0 0 38 32" className="h-[32px] w-[38px]">
      <path d="M0 1h14l3 4H0z" fill="#e0a10c" />
      <path d="M0 5l17 0 3-2h18v28H0z" fill="#fcd364" />
      <path d="M7 32V19q0-2 2-2h20q2 0 2 2v13h-7v-7H14v7z" fill="#3b97e0" />
    </svg>
  );
}

function StoreIcon() {
  return (
    <svg viewBox="0 0 40 42" className="h-[42px] w-[40px]">
      <path d="M10 8V3q0-2 2-2h16q2 0 2 2v5" fill="none" stroke="#22b0ee" strokeWidth="3" />
      <path d="M0 6h40v31q0 5-5 5H5q-5 0-5-5z" fill="#f7f7f7" />
      <path d="M10 4v4M30 4v4" stroke="#22b0ee" strokeWidth="3" />
      <path d="M11 15h8v8h-8z" fill="#f1511b" />
      <path d="M21 15h8v8h-8z" fill="#80bb01" />
      <path d="M11 25h8v8h-8z" fill="#00a5f0" />
      <path d="M21 25h8v8h-8z" fill="#fbb900" />
    </svg>
  );
}

function MailIcon() {
  return (
    <svg viewBox="0 0 42 38" className="h-[38px] w-[42px]">
      <path d="M0 13L21 0l21 13v4H0z" fill="#0a56a6" />
      <path d="M4 12h34v8L21 30 4 20z" fill="#f5f7f9" />
      <path d="M0 13l21 13 21-13v25H0z" fill="#2cb5f0" />
      <path d="M21 26l21 12V13z" fill="#35c8f8" />
      <path d="M0 38l21-12 21 12z" fill="#1a94dd" />
    </svg>
  );
}

function FirefoxIcon() {
  return (
    <span className="flex size-[40px] items-center justify-center rounded-full bg-[radial-gradient(circle,#7a4df0_35%,transparent_45%)]">
      <FaFirefoxBrowser className="size-[40px]" fill="url(#fox)" />
    </span>
  );
}

function DoubleArrowIcon() {
  return (
    <svg viewBox="0 0 42 42" className="size-[42px]">
      <rect width="42" height="42" fill="#1b55a0" />
      <path d="M11 8h10l-7 13 7 16H11L2 22zM29 8h10l-7 13 8 16H29l-9-15z" fill="#fff" />
    </svg>
  );
}

function NotepadIcon() {
  return (
    <svg viewBox="0 0 40 38" className="h-[38px] w-[40px]">
      <path d="M33 5l6 27-7 5-4-3z" fill="#9a6a2c" />
      <path d="M14 2l20 2-2 33-20-3z" fill="#e6f6f7" />
      <path d="M14 2l20 2-4 31L1 28z" fill="url(#paper)" />
      <path d="M14 2l20 2-1 4-20-2z" fill="#c8d2d4" />
      <path d="M14 6L1 28l10 3z" fill="#2f8391" />
    </svg>
  );
}

function SteamIcon() {
  return (
    <span className="flex size-[40px] items-center justify-center rounded-full bg-white">
      <FaSteam className="size-[41px]" fill="url(#night)" />
    </span>
  );
}
